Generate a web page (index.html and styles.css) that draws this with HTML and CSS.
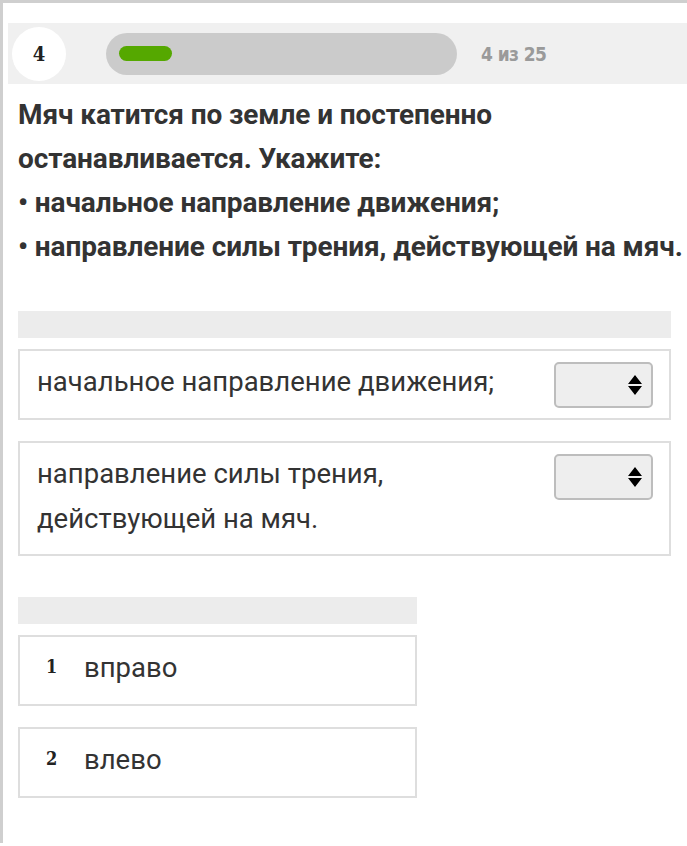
FILE: index.html
```html
<!DOCTYPE html>
<html lang="ru">
<head>
  <meta charset="UTF-8">
  <meta name="viewport" content="width=device-width, initial-scale=1.0">
  <title>Тест - вопрос 4</title>
  <link rel="stylesheet" href="styles.css">
</head>
<body>
  <div class="frame">
    <header class="progress-bar">
      <div class="num">4</div>
      <div class="track"><div class="fill" style="width: 53px"></div></div>
      <div class="count">4 из 25</div>
    </header>

    <div class="content">
      <div class="question">
        <p>Мяч катится по земле и постепенно останавливается. Укажите:</p>
        <p class="bullet">• начальное направление движения;</p>
        <p class="bullet">• направление силы трения, действующей на мяч.</p>
      </div>

      <div class="section-head wide"></div>

      <div class="match-row">
        <div class="match-text">начальное направление движения;</div>
        <select class="pick"><option></option><option>1</option><option>2</option></select>
      </div>
      <div class="match-row">
        <div class="match-text">направление силы трения,<br>действующей на мяч.</div>
        <select class="pick"><option></option><option>1</option><option>2</option></select>
      </div>

      <div class="section-head narrow"></div>

      <div class="option"><span class="opt-num">1</span><span class="opt-text">вправо</span></div>
      <div class="option"><span class="opt-num">2</span><span class="opt-text">влево</span></div>
    </div>
  </div>
</body>
</html>
```

FILE: styles.css
```css
body { margin: 0; background: #fff; font-family: Roboto, "Noto Sans", sans-serif; color: #333; overflow: hidden; }
.frame { border-left: 3px solid #cfcfcf; border-top: 3px solid #cfcfcf; min-height: 843px; box-sizing: border-box; padding-top: 20px; }

.progress-bar { display: flex; align-items: center; background: #f0f0f0; height: 61px; margin-left: 5px; padding-left: 4px; }
.num { width: 54px; height: 54px; border-radius: 50%; background: #fff; display: flex; align-items: center; justify-content: center; font-family: "DejaVu Serif Condensed", "DejaVu Serif", serif; font-weight: bold; font-size: 20px; color: #222; }
.track { width: 325px; height: 42px; border-radius: 21px; background: #cbcbcb; margin-left: 40px; padding: 0 13px; display: flex; align-items: center; }
.fill { height: 15px; border-radius: 8px; background: #55a800; }
.count { margin-left: 24px; font-family: "DejaVu Sans Condensed", "DejaVu Sans", sans-serif; font-weight: bold; font-size: 19px; color: #9a9a9a; letter-spacing: -0.6px; }

.content { padding: 0 16px 0 15px; }
.question { margin-top: 9px; font-weight: bold; font-size: 28px; line-height: 44px; color: #333; margin-bottom: 42px; letter-spacing: -0.1px; }
.question p { margin: 0; }
.question .bullet { white-space: nowrap; }

.section-head { height: 27px; background: #ececec; margin-bottom: 11px; }
.section-head.narrow { width: 399px; margin-top: 41px; }

.match-row { display: flex; justify-content: space-between; align-items: flex-start; border: 2px solid #dedede; padding: 11px 16px 10px 17px; margin-bottom: 21px; }
.match-text { font-size: 27.5px; line-height: 45px; position: relative; top: -3px; }
.pick { width: 99px; height: 46px; margin: 0; border: 2px solid #bdbdbd; border-radius: 5px; background: #eee; appearance: none; -webkit-appearance: none; background-image: url("data:image/svg+xml;utf8,<svg xmlns='http://www.w3.org/2000/svg' width='14' height='24'><path d='M7 2 L14 11 H0 Z M0 13 H14 L7 22 Z' fill='black'/></svg>"); background-repeat: no-repeat; background-position: right 9px center; }

.option { width: 395px; box-sizing: content-box; display: flex; align-items: baseline; border: 2px solid #dedede; padding: 9px 0 15px; margin-bottom: 21px; }
.opt-num { width: 64px; padding-left: 26px; box-sizing: border-box; font-family: "DejaVu Serif Condensed", "DejaVu Serif", serif; font-weight: bold; font-size: 18px; color: #222; position: relative; top: -4px; }
.opt-text { font-size: 27.5px; line-height: 43px; color: #333; }
```
